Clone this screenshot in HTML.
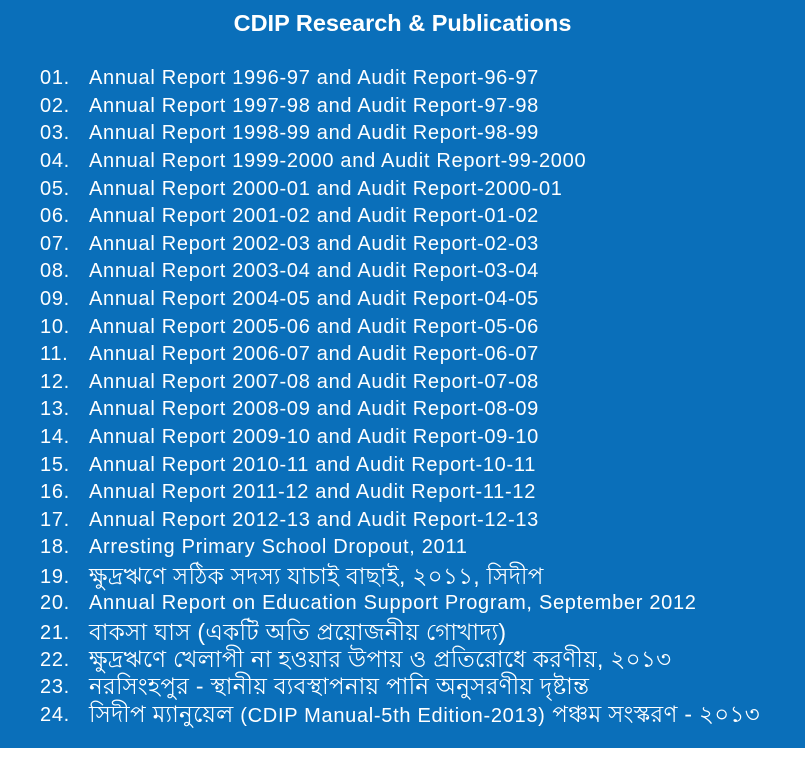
<!DOCTYPE html>
<html><head><meta charset="utf-8"><style>
html,body{margin:0;padding:0;width:805px;height:758px;background:#fff;overflow:hidden}
.bg{position:absolute;left:0;top:0;width:805px;height:748px;background:#0a6fba}
.t{position:absolute;left:0;width:805px;top:10px;text-align:center;color:#fff;font:bold 23.5px "Liberation Sans",sans-serif}
.r{position:absolute;left:40px;height:28px;line-height:28px;color:#fff;font:20px "Liberation Sans","Noto Sans CJK SC",sans-serif;white-space:nowrap;letter-spacing:0.7px}
.n{display:inline-block;width:49px;letter-spacing:0.7px}
.b{font-size:23px;letter-spacing:0.3px;line-height:20px;position:relative;top:1px}
.e{font-size:20px;letter-spacing:0.7px}
</style></head><body>
<div class="bg"></div>
<div class="t">CDIP Research &amp; Publications</div>
<div class="r" style="top:67px"><span class="n">01.</span>Annual Report 1996-97 and Audit Report-96-97</div>
<div class="r" style="top:95px"><span class="n">02.</span>Annual Report 1997-98 and Audit Report-97-98</div>
<div class="r" style="top:122px"><span class="n">03.</span>Annual Report 1998-99 and Audit Report-98-99</div>
<div class="r" style="top:150px"><span class="n">04.</span>Annual Report 1999-2000 and Audit Report-99-2000</div>
<div class="r" style="top:178px"><span class="n">05.</span>Annual Report 2000-01 and Audit Report-2000-01</div>
<div class="r" style="top:205px"><span class="n">06.</span>Annual Report 2001-02 and Audit Report-01-02</div>
<div class="r" style="top:233px"><span class="n">07.</span>Annual Report 2002-03 and Audit Report-02-03</div>
<div class="r" style="top:260px"><span class="n">08.</span>Annual Report 2003-04 and Audit Report-03-04</div>
<div class="r" style="top:288px"><span class="n">09.</span>Annual Report 2004-05 and Audit Report-04-05</div>
<div class="r" style="top:316px"><span class="n">10.</span>Annual Report 2005-06 and Audit Report-05-06</div>
<div class="r" style="top:343px"><span class="n">11.</span>Annual Report 2006-07 and Audit Report-06-07</div>
<div class="r" style="top:371px"><span class="n">12.</span>Annual Report 2007-08 and Audit Report-07-08</div>
<div class="r" style="top:398px"><span class="n">13.</span>Annual Report 2008-09 and Audit Report-08-09</div>
<div class="r" style="top:426px"><span class="n">14.</span>Annual Report 2009-10 and Audit Report-09-10</div>
<div class="r" style="top:454px"><span class="n">15.</span>Annual Report 2010-11 and Audit Report-10-11</div>
<div class="r" style="top:481px"><span class="n">16.</span>Annual Report 2011-12 and Audit Report-11-12</div>
<div class="r" style="top:509px"><span class="n">17.</span>Annual Report 2012-13 and Audit Report-12-13</div>
<div class="r" style="top:536px"><span class="n">18.</span>Arresting Primary School Dropout, 2011</div>
<div class="r" style="top:565px"><span class="n">19.</span><span class="b">ক্ষুদ্রঋণে সঠিক সদস্য যাচাই বাছাই, ২০১১, সিদীপ</span></div>
<div class="r" style="top:592px"><span class="n">20.</span>Annual Report on Education Support Program, September 2012</div>
<div class="r" style="top:621px"><span class="n">21.</span><span class="b">বাকসা ঘাস (একটি অতি প্রয়োজনীয় গোখাদ্য)</span></div>
<div class="r" style="top:648px"><span class="n">22.</span><span class="b">ক্ষুদ্রঋণে খেলাপী না হওয়ার উপায় ও প্রতিরোধে করণীয়, ২০১৩</span></div>
<div class="r" style="top:675px"><span class="n">23.</span><span class="b">নরসিংহপুর - স্থানীয় ব্যবস্থাপনায় পানি অনুসরণীয় দৃষ্টান্ত</span></div>
<div class="r" style="top:703px"><span class="n">24.</span><span class="b">সিদীপ ম্যানুয়েল <span class="e">(CDIP Manual-5th Edition-2013)</span> পঞ্চম সংস্করণ - ২০১৩</span></div>
</body></html>
